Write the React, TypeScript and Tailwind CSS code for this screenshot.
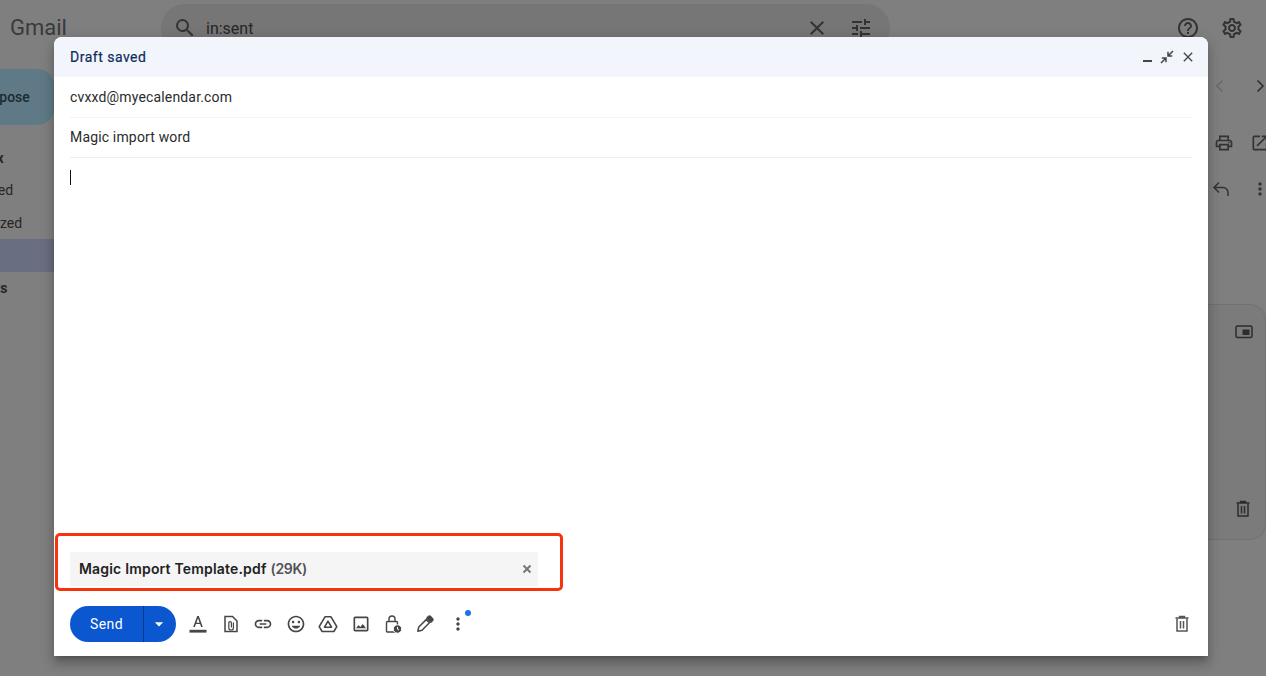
import {
  MdArrowDropDown,
  MdClose,
  MdHelpOutline,
  MdInsertEmoticon,
  MdLink,
  MdMoreVert,
  MdOpenInNew,
  MdOutlineImage,
  MdOutlinePrint,
  MdOutlineSettings,
  MdSearch,
  MdTune,
} from "react-icons/md"

function FormatText() {
  return (
    <svg width="20" height="20" viewBox="0 0 20 20" className="text-[#444746]">
      <rect x="1.500" y="15.800" width="17" height="2.800" fill="currentColor" />
      <path d="M9.200 2h1.600l4 11h-1.700l-1-2.900H7.900l-1 2.900H5.200L9.200 2zm-.8 6.700h3.200L10 4.200 8.400 8.700z" fill="currentColor" />
    </svg>
  )
}

function FileClip() {
  return (
    <svg width="20" height="20" viewBox="0 0 20 20" fill="none" stroke="#444746" strokeWidth="1.500" className="shrink-0">
      <path d="M4 2.500h7.500L16 7v10.500H4z" />
      <path d="M12.400 8.500v5.200a2.300 2.300 0 0 1-4.600 0V9a1.300 1.300 0 0 1 2.600 0v4.500" strokeWidth="1.200" />
    </svg>
  )
}

function DriveIcon() {
  return (
    <svg width="20" height="20" viewBox="0 0 20 20" fill="none" stroke="#444746" strokeWidth="1.600" strokeLinejoin="round">
      <path d="M7 2.800h6l5.800 9.800-2.900 4.900H4.100l-2.900-4.900z" />
      <path d="M10 7.200l3.500 6H6.500z" />
    </svg>
  )
}

function LockClock() {
  return (
    <svg width="20" height="20" viewBox="0 0 20 20" fill="none" stroke="#444746" strokeWidth="1.400">
      <rect x="3.500" y="7.500" width="11" height="10.500" rx="1" />
      <path d="M6 7.500V5a3 3 0 0 1 6 0v2.500" />
      <circle cx="14.500" cy="15" r="4.200" fill="#444746" stroke="#fff" strokeWidth="1" />
      <path d="M14.500 13v2.200l1.500.8" stroke="#fff" strokeWidth="1" />
    </svg>
  )
}

function PenIcon() {
  return (
    <svg width="20" height="20" viewBox="0 0 20 20" fill="none" stroke="#444746" strokeWidth="1.500" strokeLinejoin="round">
      <path d="M2.800 17.200l1-4.200 7.400-7.400 3.200 3.200-7.400 7.400z" />
      <path d="M11.800 4.200l1.800-1.800a1.200 1.200 0 0 1 1.700 0l2.300 2.300a1.200 1.200 0 0 1 0 1.700l-1.800 1.800z" fill="#444746" />
    </svg>
  )
}

function CompressArrows() {
  return (
    <svg width="14" height="14" viewBox="0 0 14 14" fill="none" stroke="#444746" strokeWidth="1.500">
      <path d="M13 1L8.500 5.500M8 1.800v4.200h4.200" />
      <path d="M1 13l4.500-4.500M1.800 8H6v4.200" />
    </svg>
  )
}

function TrashIcon({ color }: { color: string }) {
  return (
    <svg width="16" height="18" viewBox="0 0 16 18" fill="none" stroke={color}>
      <path d="M1.500 3h13M5.500 3V1.500h5V3" strokeWidth="1.300" />
      <path d="M3 3.500v12.500h10V3.500" strokeWidth="1.500" />
      <path d="M6.500 6v7.500M9.500 6v7.500" strokeWidth="1.500" />
    </svg>
  )
}

function PipIcon() {
  return (
    <svg width="18" height="14" viewBox="0 0 18 14" fill="none">
      <rect x="1" y="1" width="16" height="11.500" rx="1.500" stroke="#2c2c2c" strokeWidth="1.500" />
      <rect x="7.500" y="4.500" width="7" height="5.500" fill="#2c2c2c" />
    </svg>
  )
}

function Chevron({ left, color }: { left?: boolean; color: string }) {
  return (
    <svg width="12" height="14" viewBox="0 0 12 14" fill="none" stroke={color} strokeWidth="1.500" className="shrink-0">
      <path d={left ? "M8.500 1.500L3 7l5.500 5.500" : "M3.500 1.500L9 7l-5.500 5.500"} />
    </svg>
  )
}

function ReplyIcon() {
  return (
    <svg width="18" height="16" viewBox="0 0 18 16" fill="none" stroke="#333" strokeWidth="1.500" className="shrink-0">
      <path d="M7 1.500L2 6.500l5 5" />
      <path d="M2 6.500h9a5 5 0 0 1 5 5V15" />
    </svg>
  )
}

function Backdrop() {
  return (
    <div className="flex h-full flex-col text-[#262626]">
      <header className="flex h-[56px] shrink-0 items-center pr-[22px]">
        <span className="ml-[10px] w-[151px] text-[22px] leading-[56px] text-[#3a3a3a]">Gmail</span>
        <div className="flex h-[48px] w-[729px] items-center rounded-full bg-[#767676] pl-[12px] pr-[17px]">
          <MdSearch size={24} className="text-[#333]" />
          <span className="ml-[9px] mt-[2px] flex-1 text-[16px]">in:sent</span>
          <MdClose size={24} className="text-[#333]" />
          <MdTune size={24} className="ml-[20px] text-[#333]" />
        </div>
        <div className="ml-auto flex items-center gap-[20px]">
          <MdHelpOutline size={24} className="text-[#333]" />
          <MdOutlineSettings size={24} className="text-[#333]" />
        </div>
      </header>
      <div className="flex flex-1">
        <aside className="w-[54px] shrink-0 overflow-hidden pt-[13px] text-[14px]">
          <div className="flex h-[56px] items-center rounded-r-2xl bg-[#5f7a86]">
            <span className="ml-[-30px] font-medium text-[#1c2a30]">Compose</span>
          </div>
          <div className="mt-[17px] flex h-[32px] items-center">
            <span className="ml-[-31px] font-bold">Inbox</span>
          </div>
          <div className="flex h-[33px] items-center">
            <span className="ml-[-32px]">Starred</span>
          </div>
          <div className="flex h-[32px] items-center">
            <span className="ml-[-32px]">Snoozed</span>
          </div>
          <div className="h-[33px] bg-[#696e80]"></div>
          <div className="flex h-[32px] items-center">
            <span className="ml-[-31px] font-bold">Drafts</span>
          </div>
        </aside>
        <main className="flex-1" />
        <section className="w-[58px] shrink-0 overflow-hidden">
          <div className="flex h-[60px] items-center gap-[28px] pl-[6px]">
            <Chevron left color="#6a6a6a" />
            <Chevron color="#2c2c2c" />
          </div>
          <div className="flex h-[54px] items-center pl-[6px]">
            <MdOutlinePrint size={20} className="shrink-0 text-[#333]" />
            <MdOpenInNew size={20} className="ml-[16px] shrink-0 text-[#333]" />
          </div>
          <div className="flex h-[38px] items-center pl-[4px]">
            <ReplyIcon />
            <MdMoreVert size={20} className="ml-[20px] shrink-0 text-[#333]" />
          </div>
          <div className="mt-[96px] flex h-[236px] flex-col rounded-r-2xl border-y border-r border-[#727272] bg-[#7b7b7b] pl-[27px] pt-[20px]">
            <PipIcon />
            <div className="mt-[161px]">
              <TrashIcon color="#2c2c2c" />
            </div>
          </div>
        </section>
      </div>
    </div>
  )
}

function ComposeDialog() {
  return (
    <div className="absolute left-[54px] top-[37px] flex h-[619px] w-[1154px] flex-col overflow-hidden rounded-t-lg bg-white font-['Roboto',sans-serif] text-[14px] tracking-[0.16px] text-[#2a2b2d] shadow-[0_8px_10px_1px_rgba(0,0,0,0.14),0_3px_14px_2px_rgba(0,0,0,0.12),0_5px_5px_-3px_rgba(0,0,0,0.2)]">
      <div className="flex h-[40px] shrink-0 items-center bg-[#f2f6fc] pl-[16px] pr-[12px]">
        <span className="tracking-[0.5px] text-[#0f2c5c] [-webkit-text-stroke:0.2px_#0f2c5c]">Draft saved</span>
        <div className="ml-auto flex items-center">
          <span className="mt-[8px] h-[2px] w-[9px] bg-[#444746]"></span>
          <span className="ml-[8px]">
            <CompressArrows />
          </span>
          <MdClose size={16} className="ml-[6px] text-[#444746]" />
        </div>
      </div>
      <div className="mx-[16px] flex h-[41px] shrink-0 items-center border-b border-[#f1f3f4]">cvxxd@myecalendar.com</div>
      <div className="mx-[16px] flex h-[40px] shrink-0 items-center border-b border-[#eceff1]">Magic import word</div>
      <div className="flex-1 pl-[16px] pt-[12px]">
        <div className="h-[15px] w-px bg-[#111]"></div>
      </div>
      <div className="ml-[16px] flex h-[34px] w-[468px] shrink-0 items-center bg-[#f5f5f5] pb-[2px] pl-[9px] pr-[4px] font-['Inter',sans-serif] font-semibold tracking-[0.18px]">
        <span className="text-[#222]">Magic Import Template.pdf</span>
        <span className="ml-[4px] tracking-[-0.3px] text-[#4f5256]">(29K)</span>
        <svg width="10" height="10" viewBox="0 0 10 10" stroke="#777" strokeWidth="2" className="ml-auto mr-[2px] mt-[2px]">
          <path d="M1.500 1.500l7 7M8.500 1.500l-7 7" />
        </svg>
      </div>
      <div className="flex h-[70px] shrink-0 items-start pl-[16px] pr-[18px] pt-[20px]">
        <div className="flex h-[36px] w-[106px] items-center overflow-hidden rounded-full bg-[#0b57d0] text-white">
          <span className="flex h-full w-[74px] items-center justify-center border-r border-[#063a8f] tracking-[0.4px]">Send</span>
          <MdArrowDropDown size={20} className="ml-[5px]" />
        </div>
        <div className="ml-[12px] flex h-[36px] items-center gap-[12.500px] text-[#444746]">
          <FormatText />
          <FileClip />
          <MdLink size={20} />
          <MdInsertEmoticon size={20} />
          <DriveIcon />
          <MdOutlineImage size={20} />
          <LockClock />
          <span className="ml-[-1px] mr-[1px]">
            <PenIcon />
          </span>
          <div className="relative">
            <MdMoreVert size={20} />
            <span className="absolute right-[-3px] top-[-4px] h-[6px] w-[6px] rounded-full bg-[#1a73e8]"></span>
          </div>
        </div>
        <div className="ml-auto flex h-[36px] items-center">
          <TrashIcon color="#555" />
        </div>
      </div>
    </div>
  )
}

export default function App() {
  return (
    <div className="relative h-[676px] w-[1266px] overflow-hidden bg-[#7f7f7f] font-['Roboto',sans-serif]">
      <Backdrop />
      <ComposeDialog />
      {/* red highlight drawn over the attachment */}
      <div className="absolute left-[55px] top-[533px] h-[58px] w-[508px] rounded-[5px] border-[3px] border-[#f4330f]"></div>
    </div>
  )
}
